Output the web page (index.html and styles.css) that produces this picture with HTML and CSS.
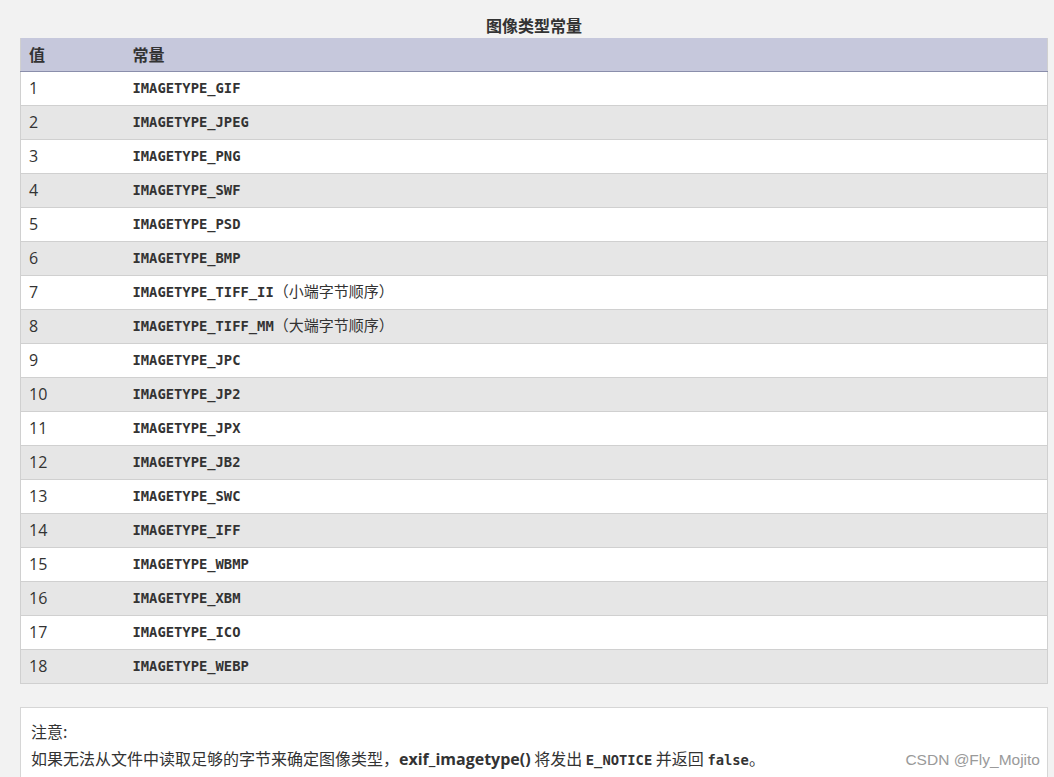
FILE: index.html
```html
<!DOCTYPE html>
<html lang="zh-CN">
<head>
<meta charset="utf-8">
<title>图像类型常量</title>
<link rel="stylesheet" href="styles.css">
</head>
<body>
<div class="page">
  <table class="doctable">
    <caption>图像类型常量</caption>
    <colgroup><col class="c-val"><col class="c-const"></colgroup>
    <thead>
      <tr><th>值</th><th>常量</th></tr>
    </thead>
    <tbody>
      <tr><td>1</td><td><code>IMAGETYPE_GIF</code></td></tr>
      <tr><td>2</td><td><code>IMAGETYPE_JPEG</code></td></tr>
      <tr><td>3</td><td><code>IMAGETYPE_PNG</code></td></tr>
      <tr><td>4</td><td><code>IMAGETYPE_SWF</code></td></tr>
      <tr><td>5</td><td><code>IMAGETYPE_PSD</code></td></tr>
      <tr><td>6</td><td><code>IMAGETYPE_BMP</code></td></tr>
      <tr><td>7</td><td><code>IMAGETYPE_TIFF_II</code>（小端字节顺序）</td></tr>
      <tr><td>8</td><td><code>IMAGETYPE_TIFF_MM</code>（大端字节顺序）</td></tr>
      <tr><td>9</td><td><code>IMAGETYPE_JPC</code></td></tr>
      <tr><td>10</td><td><code>IMAGETYPE_JP2</code></td></tr>
      <tr><td>11</td><td><code>IMAGETYPE_JPX</code></td></tr>
      <tr><td>12</td><td><code>IMAGETYPE_JB2</code></td></tr>
      <tr><td>13</td><td><code>IMAGETYPE_SWC</code></td></tr>
      <tr><td>14</td><td><code>IMAGETYPE_IFF</code></td></tr>
      <tr><td>15</td><td><code>IMAGETYPE_WBMP</code></td></tr>
      <tr><td>16</td><td><code>IMAGETYPE_XBM</code></td></tr>
      <tr><td>17</td><td><code>IMAGETYPE_ICO</code></td></tr>
      <tr><td>18</td><td><code>IMAGETYPE_WEBP</code></td></tr>
    </tbody>
  </table>
  <div class="note">
    <p class="note-title">注意:</p>
    <p class="note-text">如果无法从文件中读取足够的字节来确定图像类型，<strong>exif_imagetype()</strong> 将发出 <code>E_NOTICE</code> 并返回 <code>false</code>。</p>
    <span class="watermark">CSDN @Fly_Mojito</span>
  </div>
</div>
</body>
</html>
```
FILE: styles.css
```css
html, body {
  margin: 0;
  padding: 0;
  background: #f2f2f2;
  height: 100%;
  overflow: hidden;
}
body {
  font-family: "Open Sans", "Noto Sans", "Noto Sans CJK SC", sans-serif;
  font-size: 16px;
  color: #333;
}
.page {
  padding: 12px 6px 0 20px;
}
.doctable {
  width: 100%;
  border-collapse: collapse;
  table-layout: fixed;
  border-left: 1px solid #d0d0d0;
  border-right: 1px solid #d0d0d0;
}
.doctable caption {
  font-family: "Noto Sans CJK SC", sans-serif;
  font-weight: bold;
  font-size: 16px;
  line-height: 26px;
  color: #333;
  text-align: center;
}
.c-val { width: 104px; }
.doctable th {
  background: #c6c8dc;
  height: 33px;
  padding: 0 8px;
  box-sizing: border-box;
  text-align: left;
  font-family: "Noto Sans CJK SC", sans-serif;
  font-weight: bold;
  font-size: 16px;
  border-bottom: 1px solid #8a8eab;
  color: #333;
}
.doctable td {
  height: 34px;
  padding: 0 8px 1px 8px;
  box-sizing: border-box;
  border-bottom: 1px solid #d0d0d0;
  font-family: "Open Sans", "Noto Sans CJK SC", sans-serif;
  font-size: 16px;
  line-height: 20px;
  color: #333;
}
.doctable td:nth-child(2) {
  font-family: "Noto Sans CJK SC", sans-serif;
  font-size: 15px;
}
.doctable tbody tr:nth-child(odd) td { background: #ffffff; }
.doctable tbody tr:nth-child(even) td { background: #e6e6e6; }
code {
  font-family: "DejaVu Sans Mono", "Liberation Mono", monospace;
  font-weight: bold;
  font-size: 13.8px;
  color: #333;
}
.note {
  position: relative;
  margin-top: 23px;
  background: #fff;
  border: 1px solid #d6d6d6;
  border-bottom: none;
  height: 70px;
  box-sizing: border-box;
  padding: 10px 10px 0 10px;
}
.note p {
  margin: 0;
  font-family: "Noto Sans CJK SC", sans-serif;
  font-size: 16px;
  line-height: 27px;
  color: #333;
}
.note strong {
  font-family: "Open Sans", "Noto Sans CJK SC", sans-serif;
  font-weight: bold;
}
.watermark {
  position: absolute;
  right: 7px;
  top: 43px;
  font-family: "Liberation Sans", Arial, sans-serif;
  font-size: 15.5px;
  color: #9a9a9a;
}
```
